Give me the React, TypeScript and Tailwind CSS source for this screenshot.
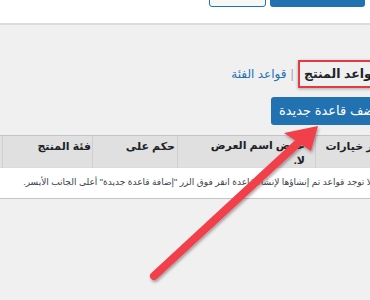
import React from "react";

const font = "font-['Liberation_Sans','DejaVu_Sans',sans-serif]";

function Arrow() {
  return (
    <svg
      className="absolute left-0 top-0 pointer-events-none"
      width="370"
      height="300"
      viewBox="0 0 370 300"
    >
      <defs>
        <filter id="shadow" x="-20%" y="-20%" width="140%" height="140%">
          <feDropShadow dx="1" dy="2" stdDeviation="1.5" floodColor="#000" floodOpacity="0.35" />
        </filter>
      </defs>
      <g filter="url(#shadow)">
        <line x1="154" y1="276" x2="298" y2="143" stroke="#f2414b" strokeWidth="8" strokeLinecap="round" />
        <polygon points="284,133 318,126 311,151" fill="#f2414b" />
      </g>
    </svg>
  );
}

export default function App() {
  return (
    <div className={`relative w-[370px] h-[300px] overflow-hidden bg-[#f0f0f1] ${font}`}>
      <div dir="rtl" className="w-[400px]">
        {/* top toolbar */}
        <div className="h-[25px] bg-white border-b-2 border-[#dcdcde] flex items-start gap-[4px] pr-[35px]">
          <div className="-mt-[23px] h-[30px] w-[95px] rounded-[3px] bg-[#2271b1]" />
          <div className="-mt-[23px] h-[30px] w-[57px] rounded-[3px] border border-[#2271b1] bg-[#f6f7f7]" />
        </div>

        {/* sub links */}
        <div className="mt-[35px] h-[28px] flex items-center pr-[14px]">
          <div className="h-[28px] flex items-center border-2 border-[#e53a40] px-[4px] shadow-[0_1px_3px_rgba(0,0,0,0.3)]">
            <span className="text-[12.5px] font-bold text-[#1d2327] whitespace-nowrap">قواعد المنتج</span>
          </div>
          <span className="mx-[4px] text-[13px] text-[#a7aaad]">|</span>
          <a className="text-[12px] text-[#2271b1] whitespace-nowrap">قواعد الفئة</a>
        </div>

        {/* add button */}
        <div className="mt-[9px] flex pr-[14px]">
          <button className="h-[28px] px-[8px] rounded-[3px] bg-[#2271b1] text-white text-[13px] whitespace-nowrap">
            أضف قاعدة جديدة
          </button>
        </div>

        {/* table */}
        <div className="mt-[10px] border-y border-[#c3c4c7]">
          <div className="grid grid-cols-[85px_138px_85px_90px_2px] h-[31px] bg-[#e0e0e0] text-[11px] font-bold text-[#1d2327] whitespace-nowrap">
            <div className="pr-[2px] pt-[2px] border-l border-[#cfcfcf]">إظهار خيارات</div>
            <div className="pr-[10px] pt-[2px] leading-[15px] border-l border-[#cfcfcf]">
              عرض اسم العرض
              <br />
              لا.
            </div>
            <div className="pr-[2px] pt-[2px] border-l border-[#cfcfcf]">حكم على</div>
            <div className="pr-[1px] pt-[2px] border-l border-[#cfcfcf]">فئة المنتج</div>
            <div />
          </div>
          <div className="h-[31px] bg-white border-t border-[#dcdcde] flex items-center pr-[28px] text-[9px] text-[#3c434a] whitespace-nowrap">
            لا توجد قواعد تم إنشاؤها لإنشاء قاعدة انقر فوق الزر "إضافة قاعدة جديدة" أعلى الجانب الأيسر.
          </div>
        </div>
      </div>
      <Arrow />
    </div>
  );
}
